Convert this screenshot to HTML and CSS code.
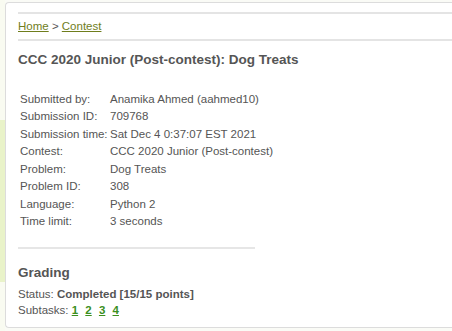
FILE: index.html
```html
<!DOCTYPE html>
<html lang="en">
<head>
    <meta charset="UTF-8">
    <meta name="viewport" content="width=device-width, initial-scale=1.0">
    <title>Submission 709768</title>
    <link rel="stylesheet" href="styles.css">
</head>
<body>
    <div class="page">
        <div class="rail"></div>

        <div class="panel">
            <div class="breadcrumb">
                <a href="#">Home</a> &gt; <a href="#">Contest</a>
            </div>

            <h1>CCC 2020 Junior (Post-contest): Dog Treats</h1>

            <table class="details">
                <tr><td>Submitted by:</td><td>Anamika Ahmed (aahmed10)</td></tr>
                <tr><td>Submission ID:</td><td>709768</td></tr>
                <tr><td>Submission time:</td><td>Sat Dec 4 0:37:07 EST 2021</td></tr>
                <tr><td>Contest:</td><td>CCC 2020 Junior (Post-contest)</td></tr>
                <tr><td>Problem:</td><td>Dog Treats</td></tr>
                <tr><td>Problem ID:</td><td>308</td></tr>
                <tr><td>Language:</td><td>Python 2</td></tr>
                <tr><td>Time limit:</td><td>3 seconds</td></tr>
            </table>

            <div class="divider"></div>

            <h2>Grading</h2>
            <div class="line">Status: <b>Completed [15/15 points]</b></div>
            <div class="line">Subtasks:
                <a class="subtask" href="#">1</a>
                <a class="subtask" href="#">2</a>
                <a class="subtask" href="#">3</a>
                <a class="subtask" href="#">4</a>
            </div>
        </div>
    </div>
</body>
</html>
```

FILE: styles.css
```css
body {
    margin: 0;
    font-family: "Liberation Sans", Arial, sans-serif;
    font-size: 11.5px;
    color: #555;
    background-color: #fafbf6;
}

.page {
    display: flex;
    height: 331px;
    overflow: hidden;
}

.rail {
    width: 5px;
    flex-shrink: 0;
    background: linear-gradient(to bottom, #f9fbf1 0, #f9fbf1 120px, #e9f3c9 120px, #e9f3c9 282px, #f9fbf1 282px);
}

.panel {
    flex: 1;
    margin-top: 2px;
    height: 324px;
    padding-left: 12px;
    background-color: #fff;
    border: 1px solid #dcdcdc;
    border-right: none;
    border-radius: 4px 0 0 4px;
}

.breadcrumb {
    margin-top: 9px;
    line-height: 25px;
    border-top: 2px solid #e4e4e4;
    border-bottom: 2px solid #e4e4e4;
}

.breadcrumb a {
    color: #6f7d1c;
}

h1 {
    margin: 10px 0 0;
    font-size: 13.5px;
    line-height: 18px;
    color: #555;
}

.details {
    margin-top: 22px;
    border-collapse: collapse;
}

.details td {
    padding: 0 0 0 2px;
    line-height: 17.45px;
    white-space: nowrap;
}

.details td:first-child {
    width: 88px;
}

.divider {
    width: 237px;
    margin-top: 16px;
    border-top: 2px solid #e6e6e6;
}

h2 {
    margin: 15px 0 4px;
    font-size: 13.5px;
    line-height: 18px;
    color: #555;
}

.line {
    line-height: 16px;
}

.subtask {
    font-weight: bold;
    color: #3b8f1e;
    margin-right: 4px;
}
```
